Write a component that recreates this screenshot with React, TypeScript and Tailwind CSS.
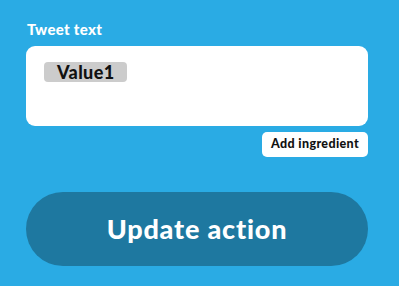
export default function App() {
  return (
    <div className="w-[399px] h-[286px] bg-[#2aabe4] pl-[26px] pr-[31px] pt-[19px] overflow-hidden" style={{ fontFamily: 'Lato, "Open Sans", sans-serif' }}>
      <div className="text-white font-black text-[15px] leading-[20px] ml-[1px] tracking-[0.02em]">Tweet text</div>
      <div className="mt-[7px] h-[80px] bg-white rounded-[9px] pl-[18px] pt-[15px]">
        <span className="inline-block bg-[#cccccc] rounded-[4px] px-[13px] h-[20px] leading-[20px] text-[18px] font-black text-[#111] tracking-[0.02em]">Value1</span>
      </div>
      <div className="flex justify-end mt-[6px]">
        <button className="bg-white rounded-[5px] h-[25px] w-[106px] text-[12.5px] font-black text-[#111] tracking-[0.03em]">Add ingredient</button>
      </div>
      <button className="mt-[35px] w-full h-[74px] rounded-full bg-[#1e78a0] text-white font-black text-[27px] tracking-[0.03em]">Update action</button>
    </div>
  );
}
